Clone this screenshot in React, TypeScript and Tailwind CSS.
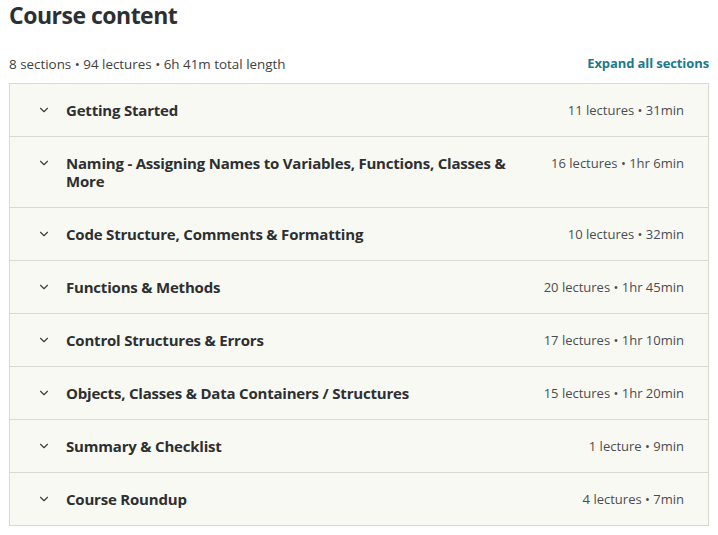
import React from 'react';
import { ChevronDown } from 'lucide-react';

interface Section {
  title: string;
  meta: string;
}

const sections: Section[] = [
  { title: 'Getting Started', meta: '11 lectures • 31min' },
  { title: 'Naming - Assigning Names to Variables, Functions, Classes & More', meta: '16 lectures • 1hr 6min' },
  { title: 'Code Structure, Comments & Formatting', meta: '10 lectures • 32min' },
  { title: 'Functions & Methods', meta: '20 lectures • 1hr 45min' },
  { title: 'Control Structures & Errors', meta: '17 lectures • 1hr 10min' },
  { title: 'Objects, Classes & Data Containers / Structures', meta: '15 lectures • 1hr 20min' },
  { title: 'Summary & Checklist', meta: '1 lecture • 9min' },
  { title: 'Course Roundup', meta: '4 lectures • 7min' },
];

export default function App() {
  return (
    <div className="w-full min-h-screen bg-white px-[9px] text-[#2d2f31]" style={{ fontFamily: '"Open Sans", "Noto Sans", sans-serif' }}>
      <h2 className="text-[23px] font-bold leading-[31px] tracking-[-0.5px]">Course content</h2>

      <div className="flex items-end justify-between mt-[23px] mb-[10px]">
        <span className="text-[13.4px] leading-[18px] text-[#3e4143]">8 sections • 94 lectures • 6h 41m total length</span>
        <button className="text-[13px] font-bold leading-[18px] tracking-[-0.1px] text-[#1a7a8c] mb-[1px]">Expand all sections</button>
      </div>

      <div className="border border-[#d9d9cf] bg-[#f9f9f4]">
        {sections.map((s, i) => (
          <div
            key={i}
            className={`flex items-start pl-[27px] pr-[24px] py-[17px] ${i > 0 ? 'border-t border-[#d9d9cf]' : ''}`}
          >
            <ChevronDown className="w-[14px] h-[14px] mt-[2px] text-[#3e4143] shrink-0" strokeWidth={2} />
            <span className="ml-[15px] flex-1 pr-[34px] text-[15px] font-bold leading-[18px] tracking-[-0.2px] text-[#2d2f31]">{s.title}</span>
            <span className="text-[13px] leading-[18px] text-[#4a4d50] whitespace-nowrap">{s.meta}</span>
          </div>
        ))}
      </div>
    </div>
  );
}
